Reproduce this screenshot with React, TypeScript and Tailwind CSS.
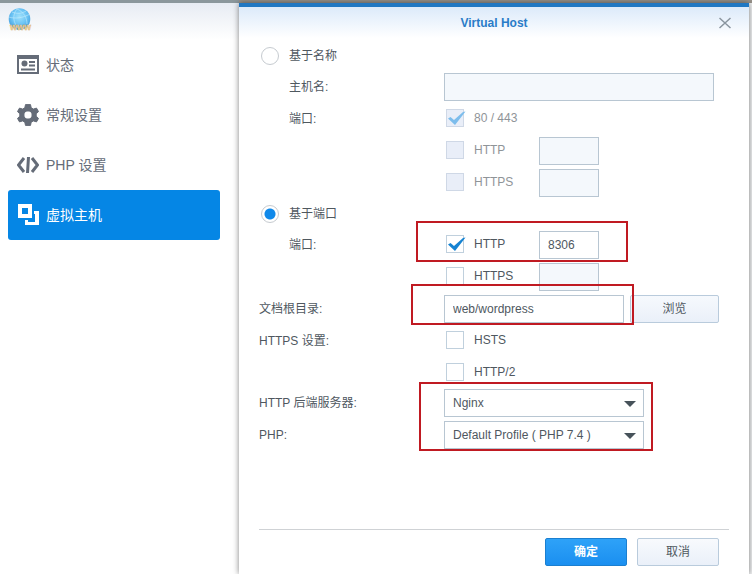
import React, { useState } from 'react';

const FONT = "font-['Liberation_Sans','Noto_Sans_CJK_SC',sans-serif]";

const menu = [
  { id: 'status', label: '状态', icon: <StatusIcon /> },
  { id: 'general', label: '常规设置', icon: <GearIcon /> },
  { id: 'php', label: 'PHP 设置', icon: <CodeIcon /> },
  { id: 'vhost', label: '虚拟主机', icon: <HostIcon /> },
];

function StatusIcon() {
  return (
    <svg width="22" height="22" viewBox="0 0 22 22" fill="currentColor">
      <path fillRule="evenodd" d="M0 1h22v19H0zM2 5v13h18V5z" />
      <circle cx="7.500" cy="9.500" r="3" />
      <path d="M12 7h6v2h-6zM12 10.500h6v2h-6zM4 14.500h14v2H4z" />
    </svg>
  );
}

function GearIcon() {
  return (
    <svg width="22" height="22" viewBox="0 0 22 22" fill="currentColor" stroke="currentColor" strokeWidth="1" strokeLinejoin="round">
      <path
        fillRule="evenodd"
        d="M8.500 .6h5l.7 3.200 2.200 1.300 3.100-1 2 3.500-2.300 2.200v2.400l2.300 2.200-2 3.500-3.100-1-2.200 1.300-.7 3.200h-5l-.7-3.200-2.200-1.300-3.100 1-2-3.500 2.300-2.200V9.800L.5 7.600l2-3.500 3.100 1 2.200-1.300zM11 6.900a4.100 4.100 0 1 0 0 8.200 4.100 4.100 0 0 0 0-8.200z"
      />
    </svg>
  );
}

function CodeIcon() {
  return (
    <svg width="22" height="22" viewBox="0 0 22 22" fill="none" stroke="currentColor">
      <path d="M7 4 1.500 11 7 18M15 4l5.500 7-5.500 7" strokeWidth="3" />
      <path d="M11.500 3 10.500 19" strokeWidth="3" />
    </svg>
  );
}

function HostIcon() {
  return (
    <svg width="22" height="22" viewBox="0 0 22 22" fill="currentColor">
      <path fillRule="evenodd" d="M1 0h14v14H1zM5 4v6h6V4z" />
      <path d="M17 7h5v14H8v-5h3v2h7v-8h-1z" />
    </svg>
  );
}

function Logo() {
  return (
    <svg width="24" height="24" viewBox="0 0 24 24" role="img" aria-label="Web Station">
      <defs>
        <radialGradient id="globe" cx="0.5" cy="0.4" r="0.6">
          <stop offset="0" stopColor="#9fe0fb" />
          <stop offset="0.6" stopColor="#6ac3f4" />
          <stop offset="1" stopColor="#479fdc" />
        </radialGradient>
      </defs>
      <circle cx="11.500" cy="11" r="10.800" fill="url(#globe)" />
      <path d="M1 9c6 2 14 1 21-3M9 1c-5 6-4 14 2 20M9 1c7 3 10 9 10 15M4 4c5 2 9 2 14-1" fill="none" stroke="#c4ecfd" strokeWidth="0.6" />
      <text x="2" y="22" fontSize="9" fontWeight="bold" fill="#f8dca0" stroke="#d0a060" strokeWidth="0.3" fontFamily="Liberation Sans">www</text>
    </svg>
  );
}

function Check({ id, label, checked = false, disabled = false }: { id: string; label: string; checked?: boolean; disabled?: boolean }) {
  const [on, setOn] = useState(checked);
  return (
    <div className="ml-0.5 flex w-[93px] shrink-0 items-center gap-2.5">
      <span className="relative flex">
        <input
          id={id}
          type="checkbox"
          checked={on}
          disabled={disabled}
          onChange={(e) => setOn(e.target.checked)}
          className="size-[18px] appearance-none border border-[#c0d0dd] bg-white disabled:border-[#cfd8e6] disabled:bg-[#e9eef8]"
        />
        {on && (
          <svg className="pointer-events-none absolute left-0.5 top-0" width="18" height="18" viewBox="0 0 18 18" fill={disabled ? '#7dbdec' : '#1583d2'}>
            <path d="M0 9.500 2.500 8 6 11 15 3 17.500 2.500 7 16z" />
          </svg>
        )}
      </span>
      <label htmlFor={id} className={disabled ? 'text-[#8f9498]' : ''}>{label}</label>
    </div>
  );
}

function Radio({ id, label, checked, onChange }: { id: string; label: string; checked: boolean; onChange: () => void }) {
  return (
    <div className="ml-0.5 flex h-[30px] items-center gap-2.5">
      <input
        id={id}
        type="radio"
        name="vhost-type"
        checked={checked}
        onChange={onChange}
        className="size-[18px] appearance-none rounded-full border border-[#c6cbd0] bg-white checked:bg-[radial-gradient(circle,#1089ea_0_5px,#ffffff_6px)]"
      />
      <label htmlFor={id}>{label}</label>
    </div>
  );
}

function Row({ label, htmlFor, indent, children }: { label?: string; htmlFor?: string; indent?: boolean; children: React.ReactNode }) {
  return (
    <div className="mb-0.5 flex h-[30px] items-center">
      <label htmlFor={htmlFor} className={`w-[185px] shrink-0 pt-0.5 ${indent ? 'pl-[30px]' : ''}`}>{label}</label>
      {children}
    </div>
  );
}

function Field({ id, label, width, value, disabled }: { id: string; label?: string; width: string; value?: string; disabled?: boolean }) {
  return (
    <input
      id={id}
      type="text"
      aria-label={label}
      defaultValue={value}
      disabled={disabled}
      className={`h-7 self-end border border-[#b8c6d2] bg-white px-2 outline-none disabled:bg-[#f4f8fc] ${width}`}
    />
  );
}

function Dropdown({ id, options }: { id: string; options: string[] }) {
  return (
    <div className="relative w-[200px] self-end">
      <select id={id} className="block h-7 w-full appearance-none border border-[#b8c6d2] bg-white px-2 outline-none">
        {options.map((o) => (
          <option key={o}>{o}</option>
        ))}
      </select>
      <svg className="pointer-events-none absolute right-2 top-3" width="12" height="6" viewBox="0 0 12 6" fill="#47525a">
        <path d="M0 0h12L6 6z" />
      </svg>
    </div>
  );
}

// red frame drawn over the settings that have to be changed
function Mark({ className }: { className: string }) {
  return <div className={`pointer-events-none absolute z-10 border-2 border-[#c01a22] ${className}`} />;
}

export default function App() {
  const [active, setActive] = useState('vhost');
  const [type, setType] = useState('port');

  return (
    <div className={`flex min-h-screen flex-col bg-[#f1f2f3] text-xs text-[#4f585f] ${FONT}`}>
      <div className="flex h-[3px] shrink-0 bg-[#8b979c]">
        <div className="ml-[239px] flex-1 bg-[#99938b]" />
      </div>
      <div className="flex flex-1">
        <aside className="w-[239px] shrink-0 bg-white">
          <div className="flex h-[37px] items-start bg-linear-to-b from-[#e7ecf3] to-white px-2 pt-[5px]">
            <Logo />
          </div>
          <nav className="pl-2 pr-[19px]">
            {menu.map((item) => (
              <button
                key={item.id}
                type="button"
                onClick={() => setActive(item.id)}
                className={`flex h-[50px] w-full items-center gap-[7px] rounded-[3px] px-[9px] text-sm ${
                  active === item.id ? 'bg-[#0586e5] text-white' : 'text-[#656c78]'
                }`}
              >
                {item.icon}
                {item.label}
              </button>
            ))}
          </nav>
        </aside>

        <section role="dialog" aria-labelledby="title" className="relative mr-[3px] flex flex-1 flex-col border-t-4 border-[#2077c2] bg-white shadow-[0_0_6px_rgba(0,0,0,0.5)]">
          <header className="relative mb-[3px] flex h-[31px] items-center justify-center bg-linear-to-b from-[#dceafa] to-white">
            <h1 id="title" className="font-bold text-[#2a7cc8]">Virtual Host</h1>
            <button type="button" aria-label="关闭" className="absolute right-[18px] text-[#8a959f]">
              <svg width="12" height="12" viewBox="0 0 12 12" fill="none" stroke="currentColor" strokeWidth="1.5">
                <path d="M0.500 1l11 10M11.500 1 0.500 11" />
              </svg>
            </button>
          </header>

          <form className="flex flex-1 flex-col px-5" onSubmit={(e) => e.preventDefault()}>
            <Radio id="by-name" label="基于名称" checked={type === 'name'} onChange={() => setType('name')} />
            <Row label="主机名:" htmlFor="host" indent>
              <Field id="host" width="w-[270px]" disabled />
            </Row>
            <Row label="端口:" htmlFor="name-default" indent>
              <Check id="name-default" label="80 / 443" checked disabled />
            </Row>
            <Row>
              <Check id="name-http" label="HTTP" disabled />
              <Field id="name-http-port" label="HTTP" width="w-[60px]" disabled />
            </Row>
            <Row>
              <Check id="name-https" label="HTTPS" disabled />
              <Field id="name-https-port" label="HTTPS" width="w-[60px]" disabled />
            </Row>

            <Radio id="by-port" label="基于端口" checked={type === 'port'} onChange={() => setType('port')} />
            <div className="relative">
              <Row label="端口:" htmlFor="port-http" indent>
                <Check id="port-http" label="HTTP" checked />
                <Field id="port-http-port" label="HTTP" width="w-[60px]" value="8306" />
              </Row>
              <Mark className="-top-2 left-[157px] h-[41px] w-[212px]" />
            </div>
            <Row>
              <Check id="port-https" label="HTTPS" />
              <Field id="port-https-port" label="HTTPS" width="w-[60px]" disabled />
            </Row>
            <div className="relative">
              <Row label="文档根目录:" htmlFor="root-dir">
                <Field id="root-dir" width="w-[180px]" value="web/wordpress" />
                <button type="button" className="ml-1.5 h-7 w-[89px] self-end rounded-xs border border-[#b9cbdc] bg-linear-to-b from-[#f6f9fd] to-[#eaf0f9]">
                  浏览
                </button>
              </Row>
              <Mark className="-top-[9px] left-[152px] h-[41px] w-[223px]" />
            </div>
            <Row label="HTTPS 设置:" htmlFor="hsts">
              <Check id="hsts" label="HSTS" />
            </Row>
            <div className="-mb-0.5">
              <Row>
                <Check id="http2" label="HTTP/2" />
              </Row>
            </div>
            <div className="relative">
              <Row label="HTTP 后端服务器:" htmlFor="backend">
                <Dropdown id="backend" options={['Nginx', 'Apache 2.4']} />
              </Row>
              <Row label="PHP:" htmlFor="php-profile">
                <Dropdown id="php-profile" options={['Default Profile ( PHP 7.4 )']} />
              </Row>
              <Mark className="-top-[5px] left-40 h-[69px] w-[234px]" />
            </div>

            <footer className="mt-auto flex justify-end gap-2.5 border-t border-[#cfd2d5] px-2.5 py-2">
              <button type="submit" className="h-7 w-[82px] rounded-xs border border-[#1b7fd0] bg-linear-to-b from-[#2ea2f8] to-[#1a8ff0] font-bold text-white">
                确定
              </button>
              <button type="button" className="h-7 w-[82px] rounded-xs border border-[#b9cbdc] bg-linear-to-b from-[#f8fafd] to-[#eaf0f9]">
                取消
              </button>
            </footer>
          </form>
        </section>
      </div>
    </div>
  );
}
